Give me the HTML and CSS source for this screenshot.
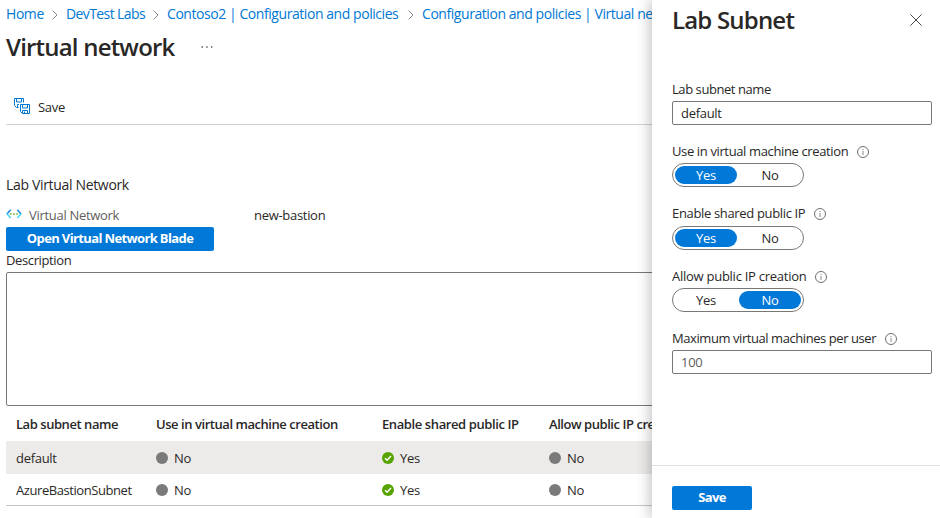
FILE: index.html
```html
<!DOCTYPE html>
<html lang="en">
<head>
<meta charset="utf-8">
<title>Virtual network</title>
<link rel="stylesheet" href="styles.css">
</head>
<body>
<svg width="0" height="0" class="defs" aria-hidden="true">
  <symbol id="chev" viewBox="0 0 6 10"><path d="M.6.6 5 5 .6 9.4" fill="none" stroke="#8a8886"/></symbol>
  <symbol id="info" viewBox="0 0 12 12"><circle cx="6" cy="6" r="5.5" fill="none" stroke="#605e5c" stroke-width=".9"/><path d="M6 5v4M6 3v1.1" stroke="#8a8886" stroke-width="1"/></symbol>
  <symbol id="ok" viewBox="0 0 12 12"><circle cx="6" cy="6" r="6" fill="#57a300"/><path d="M3 6.2 5.1 8.2 9 4" fill="none" stroke="#fff" stroke-width="1.5"/></symbol>
  <symbol id="off" viewBox="0 0 12 12"><circle cx="6" cy="6" r="6" fill="#7a7a7a"/></symbol>
</svg>
<main class="page">
  <nav class="crumbs">
    <a class="c-home">Home</a><svg class="chev"><use href="#chev"/></svg>
    <a class="c-labs">DevTest Labs</a><svg class="chev"><use href="#chev"/></svg>
    <a class="c-lab">Contoso2 | Configuration and policies</a><svg class="chev"><use href="#chev"/></svg>
    <a class="c-conf">Configuration and policies | Virtual network</a>
  </nav>
  <header class="title-row">
    <h1>Virtual network</h1>
    <svg class="more" viewBox="0 0 12 2"><path d="M.5 1h1.5M5.2 1h1.5M9.9 1h1.5" stroke="#605e5c" stroke-width="1.3"/></svg>
  </header>
  <div class="toolbar">
    <svg class="save-icon" viewBox="0 0 16 16" fill="none" stroke="#0078d4"><path d="M4.500 9.500H2.500L.5 7.500V.5h9v4M2.500.5v3.500h5V.5M3.500 9.500v-3H5M6.500 6.500h9v9h-7l-2-2zM8.500 6.500v3.500h5V6.500M8.500 15.500v-3h5v3M10.500 13.500v2"/></svg>
    <span class="t-save">Save</span>
  </div>
  <section class="details">
    <h2>Lab Virtual Network</h2>
    <div class="prop">
      <svg class="net" viewBox="0 0 16 10" fill="none"><path d="M4.700 .8.900 5" stroke="#1a86dc" stroke-width="1.500"/><path d="M.900 4.700 4.700 9" stroke="#42d4f4" stroke-width="1.500"/><path d="M11.300.8 15.100 5" stroke="#1a86dc" stroke-width="1.500"/><path d="M15.100 4.700 11.300 9" stroke="#42d4f4" stroke-width="1.500"/><path d="M4 5h1.800M7.100 5h1.800M10.200 5H12" stroke="#76bc2d" stroke-width="1.700"/></svg>
      <span class="prop-name">Virtual Network</span>
      <span class="prop-value">new-bastion</span>
    </div>
    <button class="btn open"><span>Open Virtual Network Blade</span></button>
    <label class="desc-label">Description</label>
    <div class="desc"></div>
  </section>
  <div class="table">
    <div class="tr head"><span>Lab subnet name</span><span>Use in virtual machine creation</span><span class="h3c">Enable shared public IP</span><span>Allow public IP creation</span></div>
    <div class="tr sel"><span>default</span><span class="st"><svg><use href="#off"/></svg>No</span><span class="st"><svg><use href="#ok"/></svg>Yes</span><span class="st"><svg><use href="#off"/></svg>No</span></div>
    <div class="tr last"><span class="subnet">AzureBastionSubnet</span><span class="st"><svg><use href="#off"/></svg>No</span><span class="st"><svg><use href="#ok"/></svg>Yes</span><span class="st"><svg><use href="#off"/></svg>No</span></div>
  </div>
</main>
<aside class="panel">
  <header class="panel-head">
    <h1>Lab Subnet</h1>
    <svg class="close" viewBox="0 0 12 12"><path d="M.4.4 11.600 11.600M11.600.4.4 11.600" stroke="#484644" stroke-width="1"/></svg>
  </header>
  <div class="field"><div class="label"><span class="l1">Lab subnet name</span></div><div class="input">default</div></div>
  <div class="field"><div class="label"><span class="l2">Use in virtual machine creation</span><svg class="info"><use href="#info"/></svg></div><div class="pill"><span class="on">Yes</span><span>No</span></div></div>
  <div class="field tall"><div class="label"><span class="l3">Enable shared public IP</span><svg class="info"><use href="#info"/></svg></div><div class="pill"><span class="on">Yes</span><span>No</span></div></div>
  <div class="field"><div class="label"><span class="l4">Allow public IP creation</span><svg class="info"><use href="#info"/></svg></div><div class="pill"><span>Yes</span><span class="on">No</span></div></div>
  <div class="field"><div class="label"><span class="l5">Maximum virtual machines per user</span><svg class="info"><use href="#info"/></svg></div><div class="input muted">100</div></div>
  <footer><button class="btn">Save</button></footer>
</aside>
</body>
</html>
```
FILE: styles.css
```css
* { box-sizing: border-box; }
body { margin: 0; width: 940px; height: 518px; overflow: hidden; position: relative; background: #fff; color: #292827; font: 13px/18px "Open Sans", "Noto Sans", sans-serif; letter-spacing: -0.3px; }
h1, h2 { margin: 0; font-weight: 600; }
h1 { font-size: 24px; line-height: 32px; letter-spacing: -0.8px; }
h2 { font-size: 14px; line-height: 18px; font-weight: 400; letter-spacing: -0.33px; }
svg { flex: none; display: block; }
.defs { position: absolute; }
span, a { white-space: nowrap; }
.page { padding-left: 6px; width: 652px; height: 518px; overflow: hidden; }
.crumbs { display: flex; align-items: center; height: 28px; color: #0078d4; font-size: 14px; letter-spacing: -0.44px; overflow: hidden; }
.crumbs a { flex: none; }
.crumbs .c-labs { letter-spacing: -0.6px; }
.crumbs .c-conf { flex: 0 1 auto; min-width: 0; overflow: hidden; }
.chev { width: 6px; height: 10px; margin: 2px 8px 0 9px; }
.c-home { width: 37px; }
.c-labs { width: 78px; }
.c-lab { width: 232px; }
.title-row { display: flex; align-items: center; height: 38px; }
.title-row h1 { width: 195px; white-space: nowrap; }
.more { width: 12px; height: 2px; }
.toolbar { display: flex; align-items: center; margin-top: 24px; height: 35px; padding: 0 0 2px 8px; gap: 8px; border-bottom: 1px solid #d2d0ce; }
.save-icon { width: 16px; height: 16px; }
.t-save { padding-top: 2px; }
.details { display: flex; flex-direction: column; align-items: flex-start; padding-top: 51px; }
.prop { display: flex; align-items: center; height: 18px; margin-top: 12px; }
.net { width: 16px; height: 10px; margin: -2px 7px 0 0; }
.prop-name { width: 225px; color: #605e5c; }
.btn { height: 24px; width: 80px; padding: 0 0 1px; border: 0; border-radius: 2px; background: #0078d7; color: #fff; font: 700 13px/23px "Open Sans", "Noto Sans", sans-serif; letter-spacing: -0.6px; }
.open { width: 208px; margin-top: 3px; letter-spacing: -0.63px; }
.desc-label { height: 21px; letter-spacing: -0.38px; }
.desc { width: 940px; height: 134px; border: 1px solid #7a7876; border-radius: 2px; }
.table { width: 940px; }
.tr { display: grid; grid-template-columns: 140px 226px 167px 250px; align-items: center; padding-left: 10px; height: 33px; }
.head { height: 35px; font-weight: 600; letter-spacing: -0.45px; }
.h3c { letter-spacing: -0.4px; }
.subnet { letter-spacing: -0.43px; }
.sel { background: #edebe9; }
.last { height: 32px; border-bottom: 1px solid #c8c6c4; }
.st { display: flex; align-items: center; gap: 6px; }
.st svg { width: 12px; height: 12px; }
.panel { position: absolute; top: 0; right: 0; width: 288px; height: 518px; background: #fff; padding: 0 8px 0 20px; box-shadow: -1px 0 14px rgba(0,0,0,.28); display: flex; flex-direction: column; }
.panel-head { display: flex; align-items: center; justify-content: space-between; height: 40px; padding-right: 10px; margin-bottom: 40px; }
.close { width: 12px; height: 12px; }
.field { height: 62px; }
.tall { height: 63px; }
.label { display: flex; align-items: center; height: 21px; padding-bottom: 3px; }
.tall .label { height: 22px; padding-bottom: 4px; }
.info { width: 12px; height: 12px; margin: 1px 0 0 9px; }
.l1 { letter-spacing: -0.43px; }
.l2 { letter-spacing: -0.37px; }
.l3 { letter-spacing: -0.34px; }
.l4 { letter-spacing: -0.26px; }
.l5 { letter-spacing: -0.43px; }
.input { height: 24px; padding-left: 8px; border: 1px solid #7a7876; border-radius: 2px; line-height: 23px; }
.muted { color: #605e5c; }
.pill { display: flex; align-items: center; gap: 2px; width: 132px; height: 24px; padding: 0 2px; border: 1px solid #7a7876; border-radius: 12px; }
.pill span { width: 62px; height: 18px; border-radius: 9px; text-align: center; }
.pill .on { background: #0078d7; color: #fff; }
.panel footer { margin: auto -8px 0 -20px; height: 53px; padding: 20px 20px 0; border-top: 1px solid #e1dfdd; }
```
